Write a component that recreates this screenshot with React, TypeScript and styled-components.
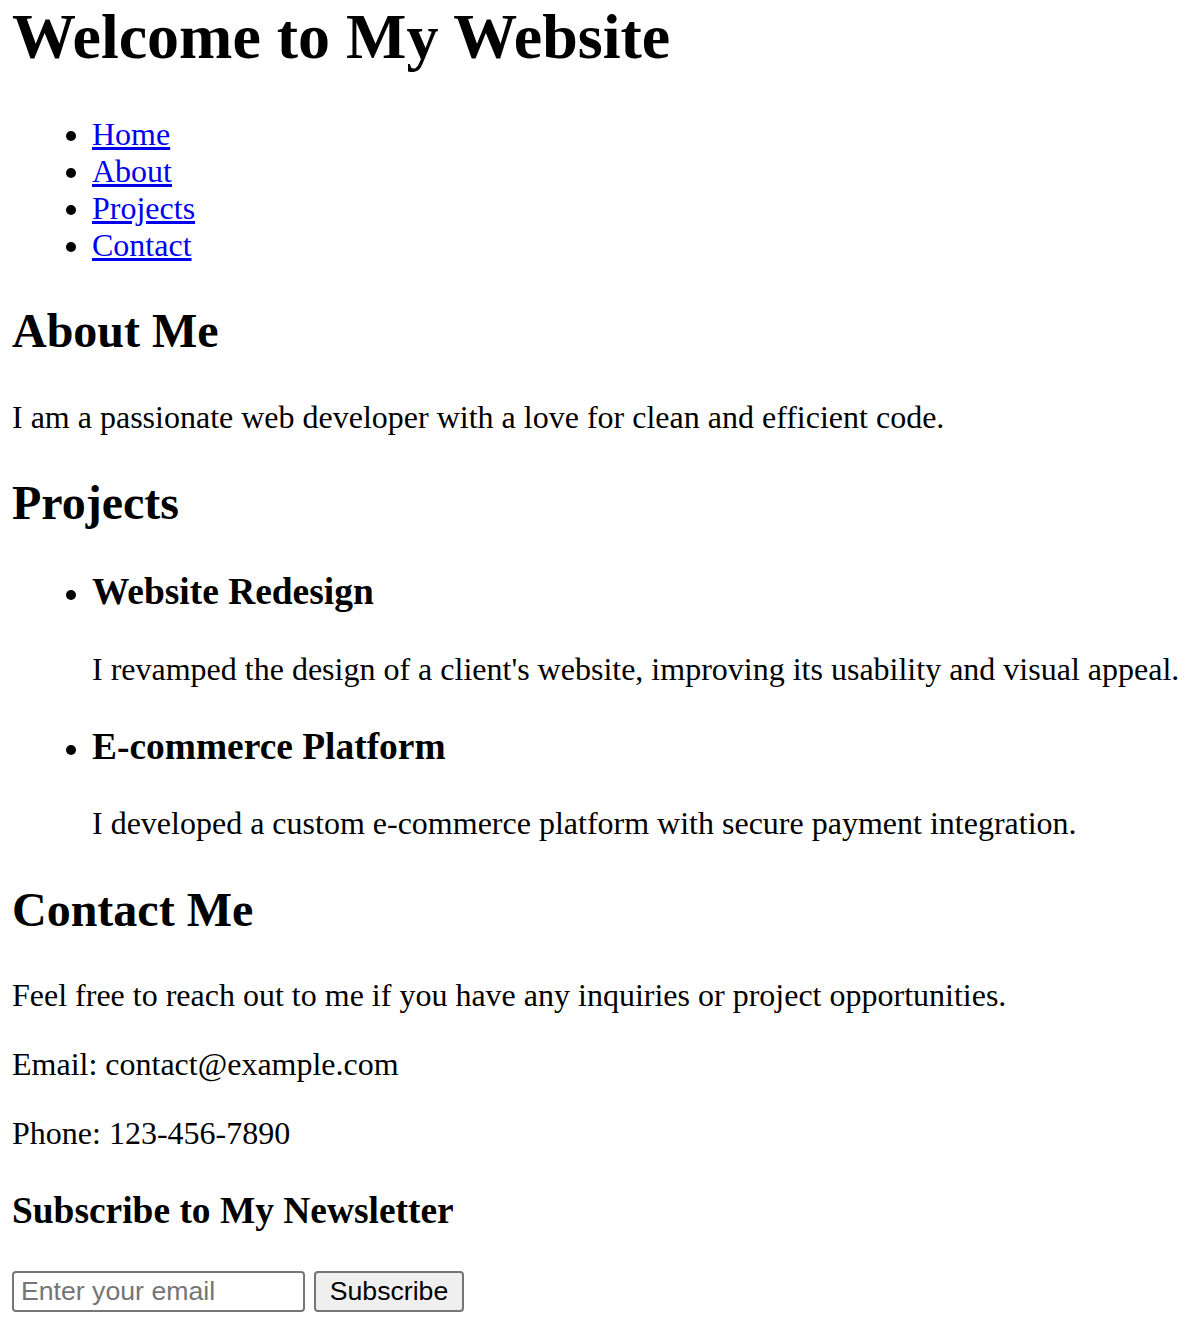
import React from "react";
import styled, { createGlobalStyle } from "styled-components";

const GlobalStyle = createGlobalStyle`
  html, body {
    margin: 0;
    padding: 0;
    background: #ffffff;
  }
  body {
    font-family: "Liberation Serif", "Times New Roman", serif;
    font-size: 32px;
    line-height: 1.15;
    color: #000000;
  }
`;

const Page = styled.div`
  padding: 0 0 20px 12px;
  display: flow-root;
`;

const Title = styled.h1`
  font-size: 64px;
  font-weight: bold;
  margin: 0 0 42.88px;
  line-height: 1.15;
  white-space: nowrap;
`;

const SectionTitle = styled.h2`
  font-size: 48px;
  font-weight: bold;
  margin: 39.84px 0;
  line-height: 1.15;
`;

const SubTitle = styled.h3`
  font-size: 37.44px;
  font-weight: bold;
  margin: 37.44px 0;
  line-height: 1.15;
  white-space: nowrap;
`;

const BulletList = styled.ul`
  list-style: disc;
  margin: 32px 0;
  padding-left: 80px;
`;

const Item = styled.li`
  line-height: 1.15;
`;

const NavLink = styled.a`
  color: #0000ee;
  text-decoration: underline;
`;

const Text = styled.p`
  margin: 32px 0;
  white-space: nowrap;
`;

const Form = styled.form`
  display: flex;
  align-items: center;
  gap: 9px;
  margin: 39.5px 0 0;
`;

const EmailInput = styled.input`
  box-sizing: border-box;
  width: 293px;
  height: 41px;
  padding: 2px 7px;
  border: 2px solid #767676;
  border-radius: 4px;
  font-family: "Liberation Sans", Arial, sans-serif;
  font-size: 26.67px;
  color: #000;
  background: #fff;
  outline: none;
  &::placeholder {
    color: #757575;
  }
`;

const SubmitButton = styled.button`
  box-sizing: border-box;
  width: 150px;
  height: 41px;
  padding: 2px 12px;
  border: 2px solid #767676;
  border-radius: 4px;
  background: #efefef;
  font-family: "Liberation Sans", Arial, sans-serif;
  font-size: 26.67px;
  color: #000;
  cursor: pointer;
`;

const navItems = ["Home", "About", "Projects", "Contact"];

const projects = [
  {
    title: "Website Redesign",
    text: "I revamped the design of a client's website, improving its usability and visual appeal.",
  },
  {
    title: "E-commerce Platform",
    text: "I developed a custom e-commerce platform with secure payment integration.",
  },
];

export default function App() {
  return (
    <>
      <GlobalStyle />
      <Page>
        <Title>Welcome to My Website</Title>
        <BulletList>
          {navItems.map((n) => (
            <Item key={n}>
              <NavLink href={`#${n.toLowerCase()}`}>{n}</NavLink>
            </Item>
          ))}
        </BulletList>

        <SectionTitle>About Me</SectionTitle>
        <Text>I am a passionate web developer with a love for clean and efficient code.</Text>

        <SectionTitle>Projects</SectionTitle>
        <BulletList>
          {projects.map((p) => (
            <Item key={p.title}>
              <SubTitle>{p.title}</SubTitle>
              <Text>{p.text}</Text>
            </Item>
          ))}
        </BulletList>

        <SectionTitle>Contact Me</SectionTitle>
        <Text>Feel free to reach out to me if you have any inquiries or project opportunities.</Text>
        <Text>Email: contact@example.com</Text>
        <Text>Phone: 123-456-7890</Text>

        <SubTitle>Subscribe to My Newsletter</SubTitle>
        <Form onSubmit={(e) => e.preventDefault()}>
          <EmailInput type="email" placeholder="Enter your email" />
          <SubmitButton type="submit">Subscribe</SubmitButton>
        </Form>
      </Page>
    </>
  );
}
